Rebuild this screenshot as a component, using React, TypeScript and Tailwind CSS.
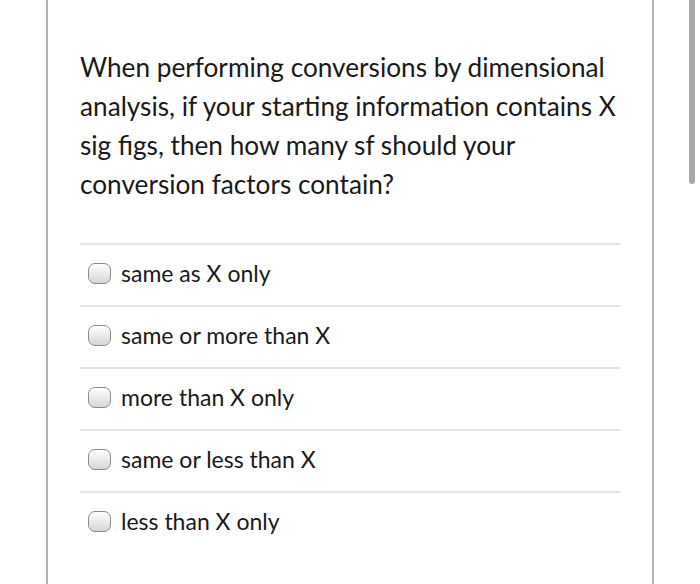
const options = [
  'same as X only',
  'same or more than X',
  'more than X only',
  'same or less than X',
  'less than X only',
]

function Radio() {
  return (
    <span className="inline-block w-[23px] h-[21px] rounded-[7px] border border-[#8a8a8a] bg-gradient-to-b from-[#ffffff] to-[#d6d6d6] shadow-[inset_0_1px_1px_rgba(255,255,255,0.9)] shrink-0" />
  )
}

export default function App() {
  return (
    <div className="relative w-[700px] h-[584px] overflow-hidden bg-white font-['Lato','Liberation_Sans',sans-serif] text-[#1a1a1a]">
      {/* card */}
      <div className="ml-[46px] w-[608px] h-full border-x-2 border-[#b3b3b3] px-[32px] pt-[48px]">
        <p className="text-[26.2px] leading-[39px] -mr-[6px]">
          When performing conversions by dimensional analysis, if your starting information contains X sig figs, then how many sf should your conversion factors contain?
        </p>
        <div className="mt-[39px]">
          {options.map((o) => (
            <div key={o} className="h-[62px] border-t-2 border-[#e3e3e3] flex items-center pl-[8px] pb-[3px] gap-[10px]">
              <Radio />
              <span className="text-[23px]">{o}</span>
            </div>
          ))}
        </div>
      </div>
      {/* scrollbar */}
      <div className="absolute left-[689px] top-0 w-[6px] h-[184px] rounded-b-full bg-[#a8a8a8]" />
    </div>
  )
}
